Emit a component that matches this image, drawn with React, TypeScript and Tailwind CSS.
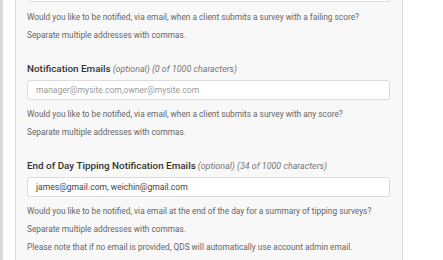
import React from "react";

const help = "h-[18px] leading-[18px] text-[8.3px] text-[#666] whitespace-nowrap";

function Field({
  label,
  meta,
  value,
  placeholder,
}: {
  label: string;
  meta: string;
  value?: string;
  placeholder?: string;
}) {
  return (
    <div className="flex flex-col">
      <div className="flex items-baseline gap-[2px] h-[14px] leading-[14px] whitespace-nowrap">
        <span className="text-[9.9px] font-medium text-[#333]">{label}</span>
        <span className="text-[8.9px] italic text-[#777]">{meta}</span>
      </div>
      <div className="mt-[4px] h-[20px] w-[363px] rounded-[3px] border border-[#dcdcdc] bg-white flex items-center px-[8px]">
        {value ? (
          <span className="text-[8.55px] text-[#444]">{value}</span>
        ) : (
          <span className="text-[8.55px] text-[#9a9a9a]">{placeholder}</span>
        )}
      </div>
    </div>
  );
}

export default function App() {
  return (
    <div
      className="w-[443px] h-[260px] overflow-hidden bg-white flex"
      style={{ fontFamily: "Roboto, 'Liberation Sans', sans-serif" }}
    >
      <div className="w-[3px] h-full bg-[#d9d9d9]" />
      <div className="w-[12px]" />
      <div className="w-[388px] h-full border-x border-[#dddddd] bg-[#f8f8f8] pl-[11px] flex flex-col">
        <div className="h-[3px] w-[363px] -mt-[1px] shrink-0 rounded-b-[3px] border border-t-0 border-[#dcdcdc] bg-white" />
        <div className={`${help} mt-[6px]`}>
          Would you like to be notified, via email, when a client submits a survey with a failing score?
        </div>
        <div className={help}>Separate multiple addresses with commas.</div>
        <div className="mt-[18px]">
          <Field
            label="Notification Emails"
            meta="(optional) (0 of 1000 characters)"
            placeholder="manager@mysite.com,owner@mysite.com"
          />
        </div>
        <div className={`${help} mt-[5px]`}>
          Would you like to be notified, via email, when a client submits a survey with any score?
        </div>
        <div className={help}>Separate multiple addresses with commas.</div>
        <div className="mt-[18px]">
          <Field
            label="End of Day Tipping Notification Emails"
            meta="(optional) (34 of 1000 characters)"
            value="james@gmail.com, weichin@gmail.com"
          />
        </div>
        <div className={`${help} mt-[5px]`}>
          Would you like to be notified, via email at the end of the day for a summary of tipping surveys?
        </div>
        <div className={help}>Separate multiple addresses with commas.</div>
        <div className={help}>
          Please note that if no email is provided, QDS will automatically use account admin email.
        </div>
      </div>
    </div>
  );
}
